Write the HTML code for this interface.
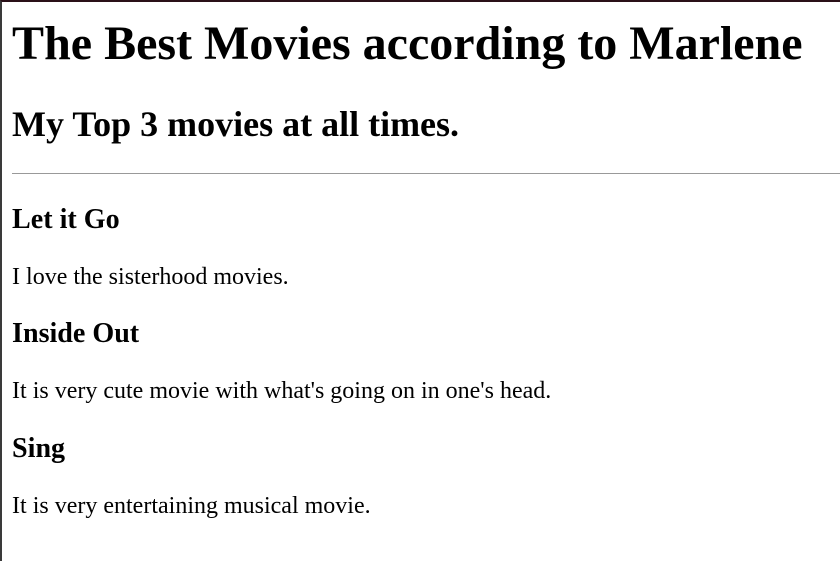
<!DOCTYPE html>
<html><head><style>
html{margin:0;padding:0;}
body{margin:0;padding:0;width:840px;height:561px;overflow:hidden;box-sizing:border-box;border-top:2px solid #2a1018;border-left:2px solid #3a3a3a;font-family:"Liberation Serif",serif;color:#000;background:#fff;}
.w{zoom:1.5;margin:0 0 0 6.7px;}
h1{font-size:32px;margin:0 0 21.7px;padding-top:9px;}
h2{font-size:24px;margin:0 0 18.7px;}
hr{margin:0;border:0;border-top:1px solid #999;}
h3{font-size:18.72px;margin:18.6px 0;}
hr+h3{margin-top:19.7px;}
p{font-size:16px;margin:16px 0;}
</style></head><body><div class="w">
<h1>The Best Movies according to Marlene</h1>
<h2>My Top 3 movies at all times.</h2>
<hr>
<h3>Let it Go</h3>
<p>I love the sisterhood movies.</p>
<h3>Inside Out</h3>
<p>It is very cute movie with what's going on in one's head.</p>
<h3>Sing</h3>
<p>It is very entertaining musical movie.</p>
</div></body></html>
